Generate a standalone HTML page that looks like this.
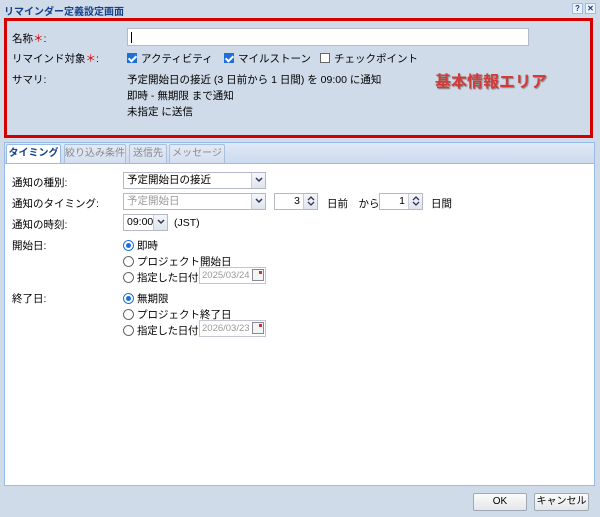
<!DOCTYPE html>
<html><head><meta charset="utf-8"><style>
*{box-sizing:border-box;margin:0;padding:0}
body{width:600px;height:517px;background:#cfdbe9;font-family:"Liberation Sans","Noto Sans CJK JP",sans-serif;font-size:10.5px;color:#000;position:relative;overflow:hidden}
.abs{position:absolute;white-space:nowrap}
.title{left:4px;top:3px;font-weight:bold;color:#15428b;font-size:10px}
.tb{top:3px;width:11px;height:11px;border:1px solid #99bbe8;background:#eef3fa;font-size:8px;line-height:9px;text-align:center;color:#15428b;font-weight:bold}
.red{left:4px;top:18px;width:589px;height:120px;border:3px solid #d40000}
.inp{background:#fff;border:1px solid #b5b8c8;height:18px}
.cb{display:inline-block;width:10px;height:10px;border:1px solid #666;vertical-align:-1px;margin-right:4px;background:#fff;position:relative}
.cb.on{background:#1e6fd8;border-color:#1e6fd8}
.cb.on:after{content:"";position:absolute;left:2px;top:0px;width:3px;height:6px;border:solid #fff;border-width:0 2px 2px 0;transform:rotate(45deg)}
.rd{display:inline-block;width:11px;height:11px;border:1px solid #666;border-radius:50%;vertical-align:-2px;margin-right:3px;background:#fff;position:relative}
.rd.on{border-color:#1e6fd8}
.rd.on:after{content:"";position:absolute;left:2px;top:2px;width:5px;height:5px;border-radius:50%;background:#1e6fd8}
.strip{left:4px;top:142px;width:591px;height:21px;background:linear-gradient(#dfe8f6,#cddbee);border:1px solid #99bbe8;border-bottom:none}
.tab{top:144px;height:19px;border:1px solid #a9c0dd;border-bottom:none;background:linear-gradient(#e3eaf4,#d3dff0);color:#888;font-size:10px;text-align:center;line-height:17px;border-radius:2px 2px 0 0}
.tab.act{background:#fff;color:#15428b;font-weight:bold;height:20px;border-color:#99bbe8}
.panel{left:4px;top:163px;width:591px;height:323px;background:#fff;border:1px solid #99bbe8}
.sel{background:#fff;border:1px solid #b5b8c8;height:17px;padding-left:3px;line-height:15px}
.arr{position:absolute;right:0;top:0;width:14px;height:15px;background:linear-gradient(#f4f6f9,#dfe5ee);border-left:1px solid #c7ccd6}
.arr svg{position:absolute;left:3px;top:4px}
.dis{color:#999}
.date{background:#fff;border:1px solid #c3c6d0;height:17px;color:#999;padding-left:2px;line-height:15px;font-size:9.5px}
.cal{position:absolute;right:1px;top:1px;width:12px;height:12px;border:1px solid #889;background:#f4f4f4}
.cal:after{content:"";position:absolute;right:1px;top:1px;width:3px;height:3px;background:#c33}
.btn{top:493px;height:18px;border:1px solid #a0a8b4;border-radius:2px;background:linear-gradient(#fbfbfb,#e3e6ea);text-align:center;line-height:16px;font-size:10px}
</style></head><body>
<div class="abs title">リマインダー定義設定画面</div>
<div class="abs tb" style="left:572px">?</div>
<div class="abs tb" style="left:585px">✕</div>
<div class="abs red"></div>
<div class="abs" style="left:12px;top:31px">名称<span style="color:#d00">＊</span>:</div>
<div class="abs inp" style="left:127px;top:28px;width:402px"><div style="margin:3px 0 0 3px;width:1px;height:11px;background:#000"></div></div>
<div class="abs" style="left:12px;top:51px">リマインド対象<span style="color:#d00">＊</span>:</div>
<div class="abs" style="left:127px;top:51px"><span class="cb on"></span>アクティビティ</div>
<div class="abs" style="left:224px;top:51px"><span class="cb on"></span>マイルストーン</div>
<div class="abs" style="left:320px;top:51px"><span class="cb"></span>チェックポイント</div>
<div class="abs" style="left:12px;top:72px">サマリ:</div>
<div class="abs" style="left:127px;top:72px;line-height:16px">予定開始日の接近 (3 日前から 1 日間) を 09:00 に通知<br>即時 - 無期限 まで通知<br>未指定 に送信</div>
<div class="abs" style="left:435px;top:68px;font-size:16px;font-weight:bold;color:#d43a3a;text-shadow:1px 1px 1px #888">基本情報エリア</div>
<div class="abs strip"></div>
<div class="abs tab act" style="left:6px;width:55px">タイミング</div>
<div class="abs tab" style="left:64px;width:62px">絞り込み条件</div>
<div class="abs tab" style="left:129px;width:38px">送信先</div>
<div class="abs tab" style="left:169px;width:56px">メッセージ</div>
<div class="abs panel"></div>
<div class="abs" style="left:12px;top:175px">通知の種別:</div>
<div class="abs sel" style="left:123px;top:172px;width:143px">予定開始日の接近<span class="arr"><svg width="8" height="6"><path d="M1 1L4 4L7 1" stroke="#335" stroke-width="1.5" fill="none"/></svg></span></div>
<div class="abs" style="left:12px;top:196px">通知のタイミング:</div>
<div class="abs sel dis" style="left:123px;top:193px;width:143px">予定開始日<span class="arr"><svg width="8" height="6"><path d="M1 1L4 4L7 1" stroke="#335" stroke-width="1.5" fill="none"/></svg></span></div>
<div class="abs sel" style="left:274px;top:193px;width:44px;text-align:right;padding-right:17px">3<span class="arr"><svg width="8" height="10" style="top:2px"><path d="M1 4L4 1L7 4M1 6L4 9L7 6" stroke="#335" stroke-width="1.3" fill="none"/></svg></span></div>
<div class="abs" style="left:327px;top:196px">日前　から</div>
<div class="abs sel" style="left:379px;top:193px;width:44px;text-align:right;padding-right:17px">1<span class="arr"><svg width="8" height="10" style="top:2px"><path d="M1 4L4 1L7 4M1 6L4 9L7 6" stroke="#335" stroke-width="1.3" fill="none"/></svg></span></div>
<div class="abs" style="left:431px;top:196px">日間</div>
<div class="abs" style="left:12px;top:217px">通知の時刻:</div>
<div class="abs sel" style="left:123px;top:214px;width:45px">09:00<span class="arr"><svg width="8" height="6"><path d="M1 1L4 4L7 1" stroke="#335" stroke-width="1.5" fill="none"/></svg></span></div>
<div class="abs" style="left:174px;top:217px">(JST)</div>
<div class="abs" style="left:12px;top:238px">開始日:</div>
<div class="abs" style="left:123px;top:238px"><span class="rd on"></span>即時</div>
<div class="abs" style="left:123px;top:254px"><span class="rd"></span>プロジェクト開始日</div>
<div class="abs" style="left:123px;top:270px;letter-spacing:-0.3px"><span class="rd"></span>指定した日付</div>
<div class="abs date" style="left:199px;top:267px;width:67px">2025/03/24<span class="cal"></span></div>
<div class="abs" style="left:12px;top:291px">終了日:</div>
<div class="abs" style="left:123px;top:291px"><span class="rd on"></span>無期限</div>
<div class="abs" style="left:123px;top:307px"><span class="rd"></span>プロジェクト終了日</div>
<div class="abs" style="left:123px;top:323px;letter-spacing:-0.3px"><span class="rd"></span>指定した日付</div>
<div class="abs date" style="left:199px;top:320px;width:67px">2026/03/23<span class="cal"></span></div>
<div class="abs btn" style="left:473px;width:54px">OK</div>
<div class="abs btn" style="left:534px;width:55px">キャンセル</div>
</body></html>
